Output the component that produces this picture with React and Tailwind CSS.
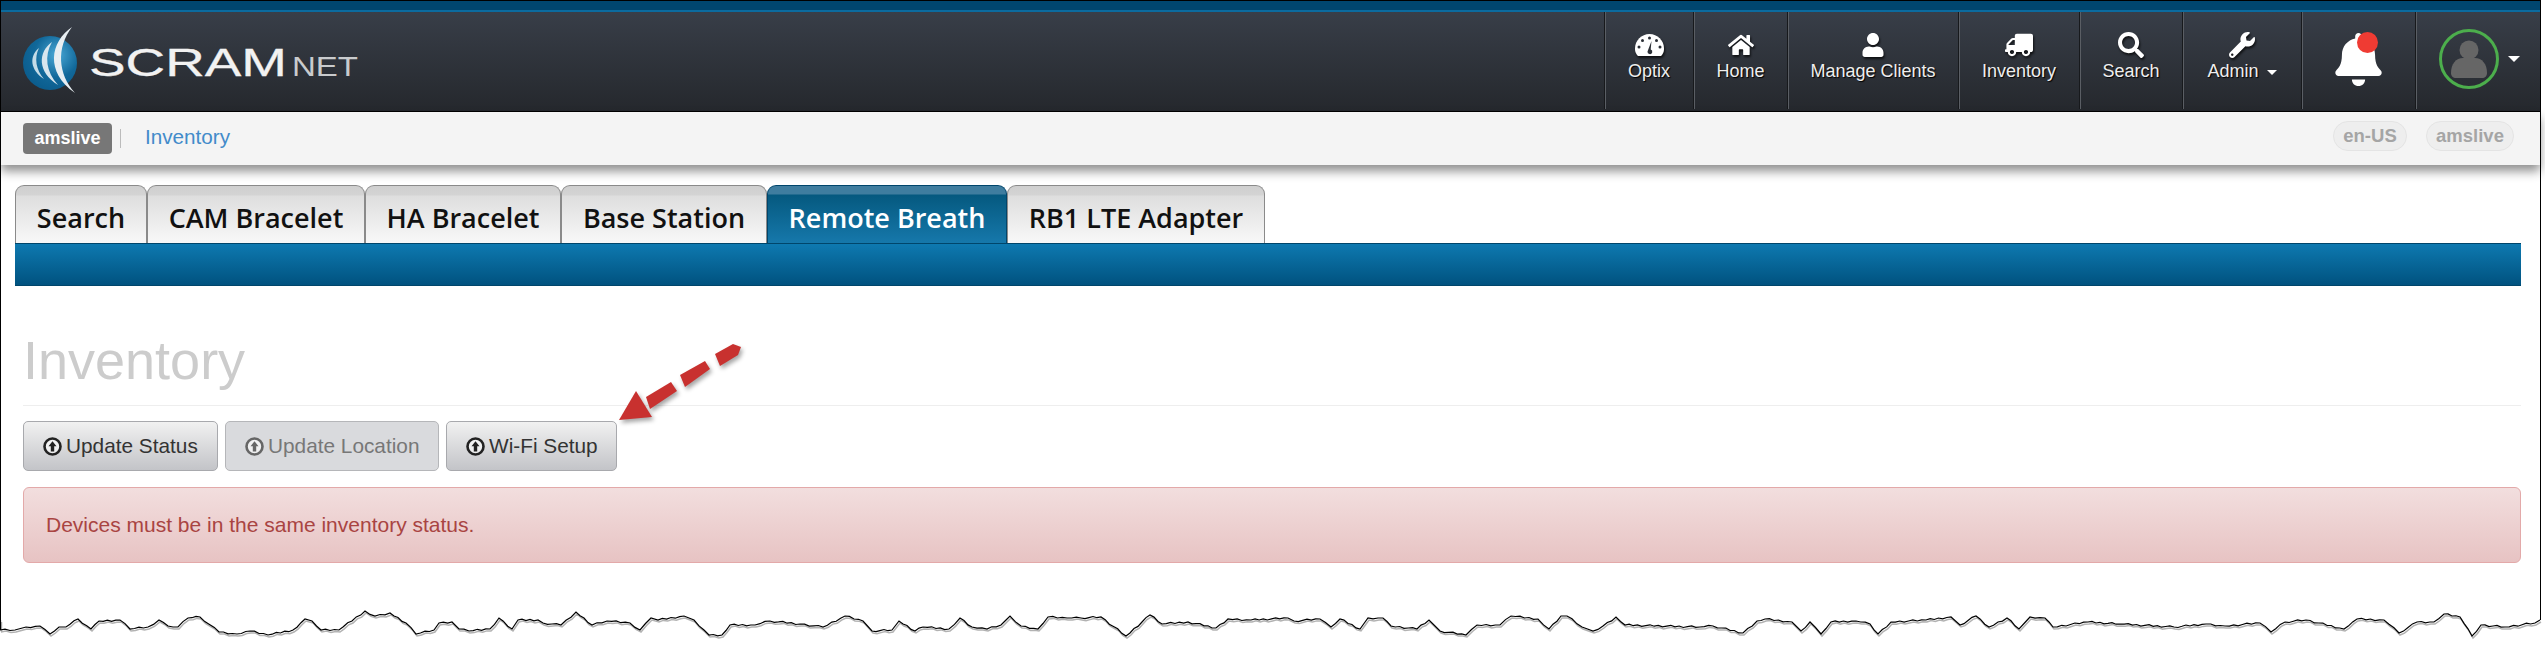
import React from "react";
import { FaHome, FaUser, FaTruck, FaSearch, FaWrench, FaBell } from "react-icons/fa";

const tabs = [
  { label: "Search", width: "w-[132px]" },
  { label: "CAM Bracelet", width: "w-[218px]" },
  { label: "HA Bracelet", width: "w-[196px]" },
  { label: "Base Station", width: "w-[206px]" },
  { label: "Remote Breath", width: "w-[240px]", active: true },
  { label: "RB1 LTE Adapter", width: "w-[258px]" },
];

// torn paper edge, traced from the screenshot: [x, y] in page pixels
const trace = [
  [0,630],[15,630],[26,627],[40,626],[50,634],[59,627],[66,627],[78,619],[91,629],[99,621],[120,620],[130,629],[148,627],[159,620],[168,626],[178,627],[188,618],[200,617],[219,632],[237,634],[250,631],[268,635],[293,630],[305,619],[312,621],[321,630],[339,630],[365,611],[375,616],[390,613],[406,623],[416,634],[434,630],[439,623],[452,622],[459,629],[469,631],[490,629],[499,618],[512,629],[518,620],[538,620],[543,623],[561,625],[576,612],[592,625],[607,621],[630,623],[640,630],[651,618],[658,620],[684,616],[694,620],[709,635],[722,635],[730,625],[755,625],[770,621],[800,624],
  [823,627],[845,616],[863,621],[872,631],[892,630],[899,621],[915,631],[923,627],[949,629],[960,618],[972,627],[987,629],[1001,625],[1010,616],[1021,626],[1038,629],[1048,617],[1067,618],[1081,618],[1101,617],[1126,636],[1150,615],[1162,624],[1188,622],[1216,628],[1228,619],[1251,620],[1288,618],[1294,621],[1320,619],[1331,627],[1340,619],[1360,629],[1368,618],[1383,618],[1391,626],[1417,629],[1429,620],[1440,631],[1466,635],[1477,625],[1500,625],[1511,616],[1538,619],[1549,629],[1561,616],[1567,616],[1582,627],[1593,631],[1603,626],[1616,617],[1625,625],
  [1700,627],[1713,626],[1743,633],[1757,621],[1765,619],[1792,622],[1801,631],[1810,622],[1821,634],[1831,622],[1856,621],[1870,624],[1878,634],[1891,622],[1926,620],[1951,617],[1960,625],[1976,616],[1989,627],[2007,618],[2019,629],[2030,617],[2045,618],[2053,627],[2088,622],[2120,624],[2174,627],[2206,624],[2225,626],[2260,623],[2271,632],[2285,622],[2306,620],[2344,629],[2357,619],[2384,620],[2399,633],[2417,622],[2434,622],[2444,614],[2460,617],[2472,636],[2481,625],[2505,627],[2535,623],[2540,620],
];

// adds the fine jagged noise between the traced points
function tornPath() {
  let out = "M0.5 620 L0.5 630";
  trace.forEach(([x, y], i) => {
    if (i > 0) {
      const [px, py] = trace[i - 1];
      const steps = Math.max(1, Math.floor((x - px) / 4));
      for (let s = 1; s < steps; s++) {
        const t = s / steps;
        const jitter = ((i * 7 + s * 13) % 5) * 0.45 - 0.9;
        out += ` L${(px + (x - px) * t).toFixed(1)} ${(py + (y - py) * t + jitter).toFixed(1)}`;
      }
    }
    out += ` L${x} ${y}`;
  });
  return out;
}

function Logo() {
  return (
    <svg width="370" height="99" viewBox="1 12 370 99" className="shrink-0">
      <defs>
        <radialGradient id="ball" cx="0.62" cy="0.35" r="0.75">
          <stop offset="0" stopColor="#4aa8d6" />
          <stop offset="0.55" stopColor="#11689a" />
          <stop offset="1" stopColor="#0a5a8a" />
        </radialGradient>
      </defs>
      <circle cx="50" cy="63" r="27" fill="url(#ball)" />
      <path d="M72 27 C50 42 45 72 75 93 C58 74 56 48 72 27Z" fill="#e8eef2" />
      <path d="M52 42 C38 52 37 72 58 85 C46 72 44 56 52 42Z" fill="#d8e6ee" />
      <path d="M39 48 C29 56 30 70 44 79 C36 70 34 58 39 48Z" fill="#c4dbe7" />
      <text x="89" y="76" textLength="198" lengthAdjust="spacingAndGlyphs" fontFamily="Liberation Sans, Arial, sans-serif" fontSize="38" fill="#f2f2f2" stroke="#f2f2f2" strokeWidth="0.3">SCRAM</text>
      <text x="292" y="76" textLength="66" lengthAdjust="spacingAndGlyphs" fontFamily="Liberation Sans, Arial, sans-serif" fontSize="28" fill="#c9cbcd">NET</text>
    </svg>
  );
}

function Gauge() {
  return (
    <svg width="29" height="22" viewBox="0 0 29 22">
      <path d="M3 22 C0 19 0 16 0 14.500 C0 6.500 6.500 0 14.500 0 C22.500 0 29 6.500 29 14.500 C29 16 29 19 26 22Z" fill="#fff" />
      <g fill="#2b2f36">
        <circle cx="14.500" cy="4" r="1.500" />
        <circle cx="7.500" cy="6.500" r="1.500" />
        <circle cx="21.500" cy="6.500" r="1.500" />
        <circle cx="4" cy="13" r="1.500" />
        <circle cx="25" cy="13" r="1.500" />
        <path d="M16.500 7 L15.700 15.500 A2.400 2.400 0 1 1 12.500 17.500 Z" />
      </g>
    </svg>
  );
}

function CircleArrow({ className }) {
  return (
    <svg width="19" height="19" viewBox="0 0 19 19" className={className}>
      <circle cx="9.500" cy="9.500" r="8" fill="#ffffff" fillOpacity="0.6" stroke="currentColor" strokeWidth="2.600" />
      <path d="M9.500 4.300 L13.500 9.200 L11.200 9.200 L11.200 14.500 L7.800 14.500 L7.800 9.200 L5.500 9.200 Z" fill="currentColor" />
    </svg>
  );
}

function NavItem({ width, label, caret, children }) {
  return (
    <div className={`${width} h-[97px] shrink-0 flex flex-col items-center pt-5 border-l border-[#17191c] shadow-[inset_1px_0_0_#5a5e64]`}>
      <div className="h-[26px] flex items-center text-white drop-shadow-[1px_2px_1px_rgba(0,0,0,0.7)]">{children}</div>
      <div className="mt-[2px] flex items-center text-[18px] leading-[22px] text-[#eeeeee] [text-shadow:1px_1px_1px_#000]">
        {label}
        {caret && <span className="ml-2 mt-[2px] border-x-[5.5px] border-t-[5.5px] border-x-transparent border-t-white" />}
      </div>
    </div>
  );
}

function Tab({ label, width, active }) {
  return (
    <div
      className={`${width} h-[58px] flex items-center justify-center rounded-t-[9px] border border-b-0 ${
        active
          ? "border-[#00456b] bg-[linear-gradient(#3f7d9f_0,#3f7d9f_8px,#05597f_9px,#1678ab_100%)] text-white"
          : "border-[#8a8a8a] bg-[linear-gradient(#cfcfcf_0,#d4d4d4_9px,#dedede_10px,#f8f8f8_100%)] text-[#111111]"
      } text-[27px] font-semibold [font-family:'Open_Sans',sans-serif]`}
    >
      <span className="mt-[7px]">{label}</span>
    </div>
  );
}

function ActionButton({ label, disabled, width }) {
  return (
    <button
      className={`${width} h-[50px] flex items-center gap-[4px] pl-[19px] rounded-[5px] border text-[20.800px] ${
        disabled
          ? "bg-[#d9dadd] border-[#b5b6b9] text-[#777777]"
          : "bg-[linear-gradient(#f1f1f1,#c3c4c8)] border-[#a8a9ad] text-[#333333]"
      }`}
    >
      <CircleArrow className={disabled ? "text-[#666666]" : "text-[#222222]"} />
      {label}
    </button>
  );
}

export default function App() {
  const torn = tornPath();
  return (
    <div className="relative w-[2545px] h-[647px] bg-white overflow-hidden [font-family:'Liberation_Sans',Arial,sans-serif]">
      <div className="w-[2541px] h-[620px] border-x border-t border-black">
        <div className="h-[9px] bg-[#00466f]" />
        <div className="h-[2px] bg-[#0b6b9f]" />
        <div className="h-[100px] flex justify-between border-b border-black bg-[linear-gradient(#383e48,#25282d)]">
          <Logo />
          <div className="flex">
            <NavItem width="w-[89px]" label="Optix"><Gauge /></NavItem>
            <NavItem width="w-[94px]" label="Home"><FaHome size={26} /></NavItem>
            <NavItem width="w-[171px]" label="Manage Clients"><FaUser size={24} /></NavItem>
            <NavItem width="w-[121px]" label="Inventory"><FaTruck size={28} className="-scale-x-100" /></NavItem>
            <NavItem width="w-[103px]" label="Search"><FaSearch size={26} /></NavItem>
            <NavItem width="w-[119px]" label="Admin" caret><FaWrench size={26} /></NavItem>
            <div className="relative w-[114px] h-[97px] shrink-0 border-l border-[#17191c] shadow-[inset_1px_0_0_#5a5e64] flex items-start justify-center pt-[21px]">
              <FaBell size={53} className="text-white" />
              <span className="absolute left-[55px] top-[20px] w-[21px] h-[21px] rounded-full bg-[#ef3b33]" />
            </div>
            <div className="w-[125px] h-[97px] shrink-0 border-l border-[#17191c] shadow-[inset_1px_0_0_#5a5e64] flex items-center pl-[23px] pb-[4px]">
              <div className="w-[60px] h-[60px] rounded-full border-[3px] border-[#4cae4c] flex items-center justify-center">
                <svg width="36" height="38" viewBox="0 0 36 38" fill="#666666">
                  <circle cx="18" cy="10" r="9.500" />
                  <path d="M0 33 C0 24 5 18 12 18 L24 18 C31 18 36 24 36 33 C36 36 34 38 31 38 L5 38 C2 38 0 36 0 33Z" />
                </svg>
              </div>
              <span className="ml-[9px] border-x-[6px] border-t-[6px] border-x-transparent border-t-white" />
            </div>
          </div>
        </div>
        <div className="relative h-[53px] flex items-center justify-between pl-[22px] pr-[26px] bg-[#f4f4f4] shadow-[0_6px_10px_rgba(0,0,0,0.45)]">
          <div className="flex items-center">
            <span className="w-[89px] h-[31px] flex items-center justify-center rounded-[4px] bg-[#777777] text-white font-bold text-[18px]">amslive</span>
            <span className="ml-[8px] w-[1px] h-[19px] bg-[#bbbbbb]" />
            <span className="ml-[24px] mb-[3px] text-[20.700px] text-[#428bca]">Inventory</span>
          </div>
          <div className="flex items-center gap-[19px] mb-[6px]">
            <span className="w-[74px] h-[30px] flex items-center justify-center rounded-full bg-[#eeeeee] border border-[#e4e4e4] text-[#a5a5a5] font-bold text-[18.500px]">en-US</span>
            <span className="w-[88px] h-[30px] flex items-center justify-center rounded-full bg-[#eeeeee] border border-[#e4e4e4] text-[#a5a5a5] font-bold text-[18.500px]">amslive</span>
          </div>
        </div>

        <div className="ml-[14px] w-[2506px] mt-5">
          <div className="flex">
            {tabs.map((t) => (
              <Tab key={t.label} {...t} />
            ))}
          </div>
          <div className="h-[43px] border-t border-b border-[#00466b] bg-[linear-gradient(#0e79b0,#00527f)]" />
        </div>

        <div className="ml-[22px] w-[2498px]">
          <div className="mt-[47px] pb-[18px] border-b border-[#eeeeee]">
            <h1 className="text-[54px] leading-[54px] text-[#cccccc]">Inventory</h1>
          </div>
          <div className="mt-[15px] flex gap-[7px]">
            <ActionButton width="w-[195px]" label="Update Status" />
            <ActionButton width="w-[214px]" label="Update Location" disabled />
            <ActionButton width="w-[171px]" label="Wi-Fi Setup" />
          </div>
          <div className="mt-4 h-[76px] flex items-center pl-[22px] rounded-[6px] border border-[#e3a9a9] bg-[linear-gradient(#f2dede,#e7c3c3)] text-[21px] text-[#a94442]">
            Devices must be in the same inventory status.
          </div>
        </div>
      </div>

      {/* red callout arrow, drawn over the page */}
      <svg className="absolute left-0 top-0 pointer-events-none" width="800" height="480">
        <g fill="#c8312f" style={{ filter: "drop-shadow(2px 3px 2px rgba(0,0,0,0.35))" }}>
          <polygon points="619,420 636,391 652,417" />
          <polygon points="646,397 671,382 677,391 650,409" />
          <polygon points="680,375 705,361 710,369 685,387" />
          <polygon points="715,354 733,344 741,347 738,355 720,366" />
        </g>
      </svg>

      {/* torn bottom edge of the screenshot */}
      <svg className="absolute left-0 top-0 pointer-events-none" width="2545" height="647" fill="none">
        <path d={`${torn} L2545 620 L2545 647 L0 647 Z`} fill="#ffffff" stroke="none" />
        <path d={torn} stroke="#000000" strokeOpacity="0.3" strokeWidth="1.500" transform="translate(1 2)" />
        <path d={torn} stroke="#000000" strokeWidth="1.200" />
      </svg>
    </div>
  );
}
